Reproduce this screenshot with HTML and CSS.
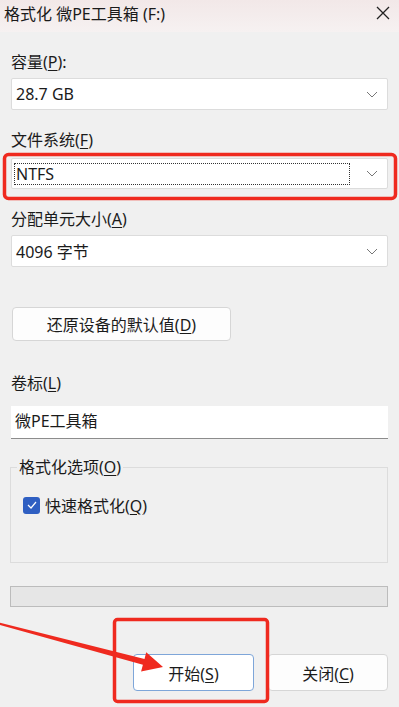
FILE: index.html
```html
<!DOCTYPE html>
<html lang="zh-CN">
<head>
    <meta charset="UTF-8">
    <meta name="viewport" content="width=device-width, initial-scale=1.0">
    <title>格式化 微PE工具箱 (F:)</title>
    <link rel="stylesheet" href="styles.css">
</head>
<body>
    <div class="window">
        <header class="titlebar">
            <span class="title">格式化 微PE工具箱 (F:)</span>
            <svg class="close" width="16" height="16" viewBox="0 0 16 16">
                <path d="M2 2 L14 14 M14 2 L2 14" stroke="#222" stroke-width="1.3" fill="none"/>
            </svg>
        </header>

        <main class="content">
            <label class="label first">容量(<u>P</u>):</label>
            <div class="combo c1">
                <span>28.7 GB</span>
                <svg class="chev" width="12" height="7" viewBox="0 0 12 7"><path d="M1 1 L6 6 L11 1" stroke="#777" fill="none"/></svg>
            </div>

            <label class="label l2">文件系统(<u>F</u>)</label>
            <div class="combo c2">
                <span class="focus">NTFS</span>
                <svg class="chev" width="12" height="7" viewBox="0 0 12 7"><path d="M1 1 L6 6 L11 1" stroke="#777" fill="none"/></svg>
            </div>

            <label class="label l3">分配单元大小(<u>A</u>)</label>
            <div class="combo c3">
                <span>4096 字节</span>
                <svg class="chev" width="12" height="7" viewBox="0 0 12 7"><path d="M1 1 L6 6 L11 1" stroke="#777" fill="none"/></svg>
            </div>

            <button class="btn restore">还原设备的默认值(<u>D</u>)</button>

            <label class="label l4">卷标(<u>L</u>)</label>
            <div class="textbox">微PE工具箱</div>

            <fieldset class="group">
                <legend>格式化选项(<u>O</u>)</legend>
                <div class="check">
                    <span class="box">
                        <svg width="10" height="8" viewBox="0 0 10 8"><path d="M1 4 L4 7 L9 1" stroke="#fff" stroke-width="1.2" fill="none"/></svg>
                    </span>
                    <span>快速格式化(<u>Q</u>)</span>
                </div>
            </fieldset>

            <div class="progress"></div>

            <div class="actions">
                <button class="btn start">开始(<u>S</u>)</button>
                <button class="btn">关闭(<u>C</u>)</button>
            </div>
        </main>

        <svg class="marks" width="399" height="707" viewBox="0 0 399 707">
            <rect x="4.5" y="154.5" width="391" height="44" rx="4" fill="none" stroke="#ef2a1f" stroke-width="3.5"/>
            <rect x="114.5" y="619.5" width="153" height="82" rx="3" fill="none" stroke="#ef2a1f" stroke-width="3.5"/>
            <polygon points="0,622.8 144.5,659 146.2,652.2 163,667 141.1,671.6 142.9,664.8 0,625" fill="#ef2a1f"/>
        </svg>
    </div>
</body>
</html>
```

FILE: styles.css
```css
body {
    margin: 0;
    padding: 0;
    background-color: #f0f0f0;
    font-family: 'Noto Sans', 'Noto Sans CJK SC', sans-serif;
    font-size: 16px;
    color: #1b1b1b;
}

u {
    text-decoration-thickness: 1px;
    text-underline-offset: 2px;
}

.window {
    position: relative;
    width: 399px;
    height: 707px;
    overflow: hidden;
}

.titlebar {
    height: 32px;
    display: flex;
    align-items: center;
    justify-content: space-between;
    padding: 0 8px 6px 4px;
    box-sizing: border-box;
    background: linear-gradient(#f2e8e8, #f6f1f1);
}

.title {
    font-size: 16px;
    color: #1a1a1a;
}

.content {
    padding: 0 11px;
}

.label {
    display: block;
    line-height: 20px;
    margin-top: 20px;
}

.label.first {
    margin-top: 20px;
}

.combo {
    display: flex;
    align-items: center;
    justify-content: space-between;
    background-color: #fff;
    border: 1px solid #dcdcdc;
    border-radius: 2px;
    box-sizing: border-box;
    padding: 0 9px 0 4px;
    margin-top: 6px;
    height: 32px;
}

.c2 {
    margin-top: 8px;
    height: 31px;
    padding-left: 2px;
}

.combo .focus {
    flex: 1;
    border: 1px dotted #333;
    line-height: 20px;
    padding-left: 1px;
    margin-right: 16px;
}

.chev {
    flex: none;
}

.btn {
    font-family: inherit;
    font-size: 16px;
    color: #1b1b1b;
    background-color: #fdfdfd;
    border: 1px solid #d6d6d6;
    border-radius: 4px;
    height: 37px;
    width: 120px;
}

.restore {
    display: block;
    width: 219px;
    height: 34px;
    margin: 40px 0 0 1px;
}

.l4 {
    margin-top: 32px;
}

.textbox {
    margin-top: 13px;
    height: 33px;
    line-height: 30px;
    box-sizing: border-box;
    padding-left: 4px;
    background-color: #fff;
    border-bottom: 1px solid #8c8c8c;
}

.group {
    margin: 18px 0 0 -1px;
    height: 106px;
    box-sizing: border-box;
    border: 1px solid #dcdcdc;
    padding: 16px 12px 10px;
}

.group legend {
    padding: 0 2px;
    margin-left: -6px;
    line-height: 20px;
}

.check {
    display: flex;
    align-items: center;
    gap: 5px;
}

.box {
    width: 17px;
    height: 17px;
    border-radius: 3px;
    background-color: #2f5fc2;
    display: flex;
    align-items: center;
    justify-content: center;
}

.progress {
    margin: 23px 0 0 -1px;
    height: 21px;
    box-sizing: border-box;
    background-color: #e6e6e6;
    border: 1px solid #bcbcbc;
}

.actions {
    display: flex;
    justify-content: flex-end;
    gap: 14px;
    margin-top: 47px;
}

.start {
    width: 121px;
    border-color: #7ea6d9;
    background-color: #fff;
}

.marks {
    position: absolute;
    left: 0;
    top: 0;
    pointer-events: none;
}
```
